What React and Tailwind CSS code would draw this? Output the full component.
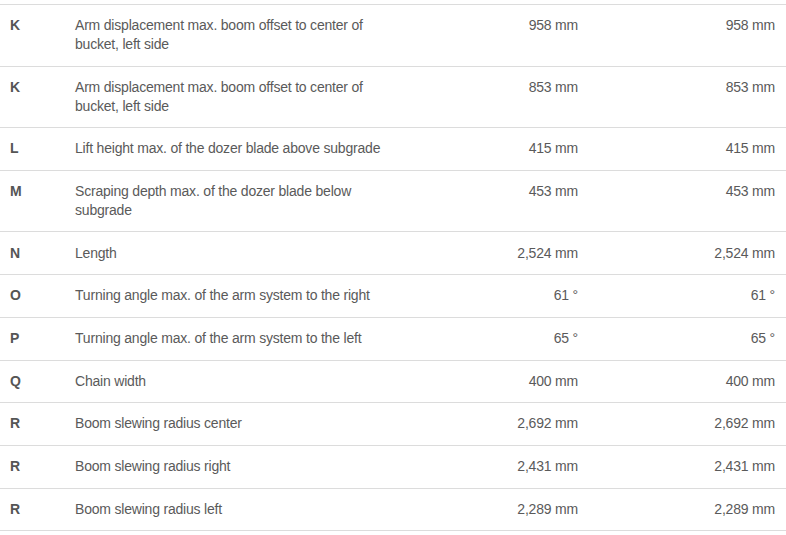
import React from "react"

const rows = [
  { code: "K", label: "Arm displacement max. boom offset to center of bucket, left side", a: "958 mm", b: "958 mm" },
  { code: "K", label: "Arm displacement max. boom offset to center of bucket, left side", a: "853 mm", b: "853 mm" },
  { code: "L", label: "Lift height max. of the dozer blade above subgrade", a: "415 mm", b: "415 mm" },
  { code: "M", label: "Scraping depth max. of the dozer blade below subgrade", a: "453 mm", b: "453 mm" },
  { code: "N", label: "Length", a: "2,524 mm", b: "2,524 mm" },
  { code: "O", label: "Turning angle max. of the arm system to the right", a: "61 °", b: "61 °" },
  { code: "P", label: "Turning angle max. of the arm system to the left", a: "65 °", b: "65 °" },
  { code: "Q", label: "Chain width", a: "400 mm", b: "400 mm" },
  { code: "R", label: "Boom slewing radius center", a: "2,692 mm", b: "2,692 mm" },
  { code: "R", label: "Boom slewing radius right", a: "2,431 mm", b: "2,431 mm" },
  { code: "R", label: "Boom slewing radius left", a: "2,289 mm", b: "2,289 mm" },
]

const App = () => {
  return (
    <div className="w-[786px] h-[535px] bg-white overflow-hidden pt-1 font-['Liberation_Sans',Arial,sans-serif] text-[14px] leading-[18.9px] tracking-[-0.2px] text-[#5a5a5a]">
      <table className="w-[786px] table-fixed border-collapse">
        <colgroup>
          <col className="w-[65px]" />
          <col className="w-[335px]" />
          <col className="w-[188px]" />
          <col className="w-[198px]" />
        </colgroup>
        <tbody>
          {rows.map((row, i) => (
            <tr key={i} className="border-t border-b border-[#dcdcdc] align-top">
              <td className="pl-[10px] pt-[11.2px] pb-[11.6px] font-bold text-[#555]">{row.code}</td>
              <td className="pl-[10px] pr-[4px] pt-[11.2px] pb-[11.6px]">{row.label}</td>
              <td className="pr-[10px] pt-[11.2px] pb-[11.6px] text-right">{row.a}</td>
              <td className="pr-[11px] pt-[11.2px] pb-[11.6px] text-right">{row.b}</td>
            </tr>
          ))}
        </tbody>
      </table>
    </div>
  )
}

export default App
